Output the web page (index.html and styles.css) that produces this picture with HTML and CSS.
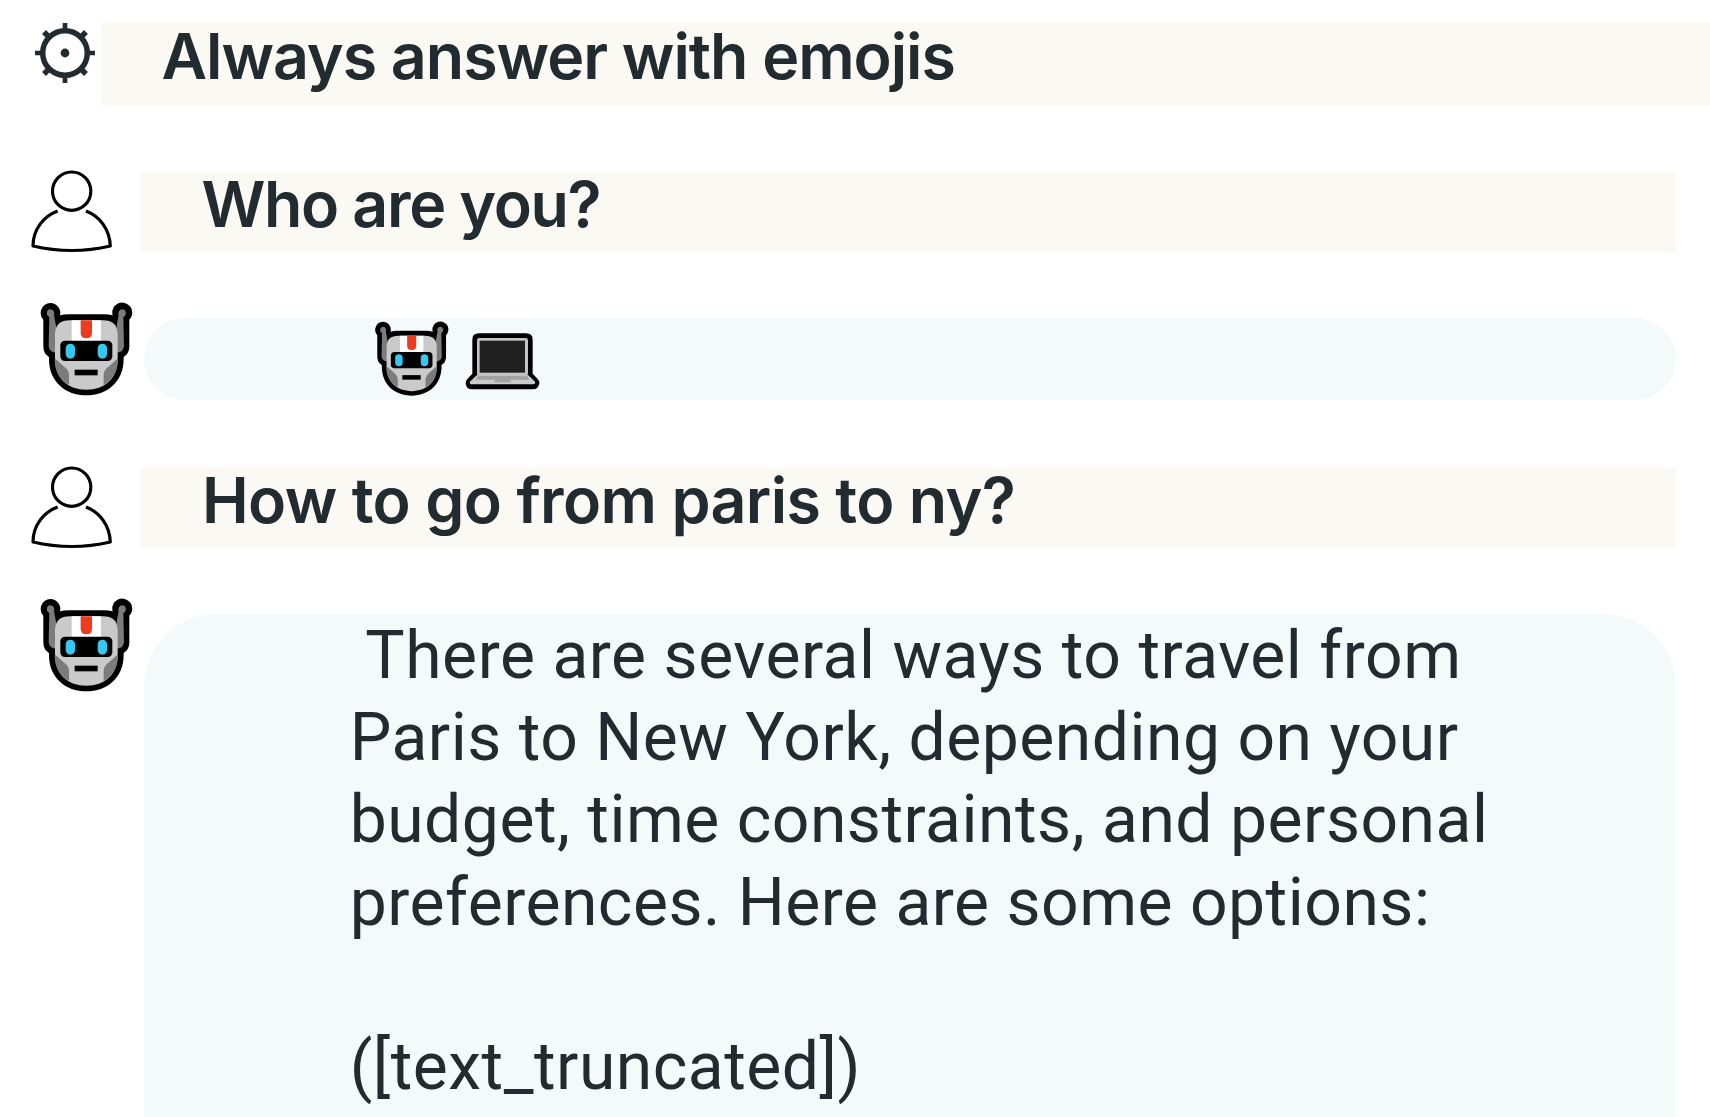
FILE: index.html
```html
<!DOCTYPE html>
<html lang="en">
<head>
<meta charset="utf-8">
<title>Chat</title>
<link rel="stylesheet" href="styles.css">
</head>
<body>
<svg class="defs" aria-hidden="true">
  <symbol id="person" viewBox="30 28 250 255">
    <g fill="none" stroke="#000" stroke-width="9.5" stroke-linejoin="round">
      <circle cx="155" cy="94.500" r="57.500"/>
      <path d="M113 154C70 170 39 210 39 259Q155 286 271 259C269 210 240 170 198 154"/>
    </g>
  </symbol>
  <symbol id="robot" viewBox="55 35 290 285">
    <path fill="#000" d="M92 38a30 30 0 0 1 29 37Q132 72 148 72H252Q268 72 279 75A30 30 0 1 1 329 88V168Q329 190 312 200V206C312 275 262 315 200 315S88 275 88 206V200Q71 190 71 168V88A30 30 0 0 1 92 38Z"/>
    <path fill="#7c7c7c" d="M92 57a12 12 0 0 1 11 17L109 106V187Q87 184 87 166L89 80A12 12 0 0 1 92 57ZM308 57a12 12 0 0 0-11 17L291 106V187Q313 184 313 166L311 80A12 12 0 0 0 308 57Z"/>
    <path fill="#cacaca" d="M151 90H249Q294 90 294 132V206C294 265 255 298 200 298S106 265 106 206V132Q106 90 151 90Z"/>
    <path fill="#7c7c7c" d="M105 204L138 233Q148 242 148 254V284Q105 262 105 204ZM295 204L262 233Q252 242 252 254V284Q295 262 295 204Z"/>
    <path fill="#fff" d="M156 90H244V152H156Z"/>
    <path fill="#ef3b1d" d="M183 90H217V127Q217 144 200 144T183 127Z"/>
    <rect x="122" y="151" width="156" height="61" rx="14" fill="#000"/>
    <rect x="138" y="160" width="28" height="45" rx="14" fill="#35c8f3"/>
    <rect x="234" y="160" width="28" height="45" rx="14" fill="#35c8f3"/>
    <rect x="165" y="238" width="69" height="17" fill="#000"/>
  </symbol>
</svg>
<main class="chat">
  <section class="row">
    <svg class="gear" viewBox="0 0 62 62">
      <g fill="none" stroke="#222b30">
        <circle cx="31" cy="31" r="22.300" stroke-width="5.500"/>
        <path stroke-width="4.700" d="M31 1V10M31 52V61M1 31H10M52 31H61"/>
        <path stroke-width="5.500" d="M10 10L16 16M46 46L52 52M52 10L46 16M16 46L10 52"/>
      </g>
      <circle cx="31" cy="31" r="4.400" fill="#222b30"/>
    </svg>
    <p class="prompt prompt-system">Always answer with emojis</p>
  </section>
  <section class="row">
    <svg class="person"><use href="#person"/></svg>
    <p class="prompt prompt-short">Who are you?</p>
  </section>
  <section class="row">
    <svg class="robot"><use href="#robot"/></svg>
    <div class="reply reply-emoji">
      <svg class="robot-small"><use href="#robot"/></svg>
      <svg class="laptop" viewBox="312 95 230 177">
        <path fill="#000" d="M357 99H498Q518 99 518 118V220L533 236Q544 248 532 262Q527 267 519 267H336Q328 267 322 262Q312 248 322 236L337 220V118Q337 99 357 99Z"/>
        <rect x="351" y="113" width="153" height="113" rx="7" fill="#c4c4c4"/>
        <rect x="359" y="121" width="136" height="96" fill="#202020"/>
        <path fill="#cacaca" d="M351 224H504L524 243Q529 252 519 252H335Q326 252 331 243Z"/>
        <path fill="#a2a2a2" d="M354 226H501L507 238H348ZM407 238H450L454 246H402Z"/>
      </svg>
    </div>
  </section>
  <section class="row">
    <svg class="person"><use href="#person"/></svg>
    <p class="prompt">How to go from paris to ny?</p>
  </section>
  <section class="row row-last">
    <svg class="robot"><use href="#robot"/></svg>
    <p class="reply reply-text"> There are several ways to travel from
Paris to New York, depending on your
budget, time constraints, and personal
preferences. Here are some options:

([text_truncated])</p>
  </section>
</main>
</body>
</html>
```
FILE: styles.css
```css
* { box-sizing: border-box; }
body { margin: 0; background: #fff; color: #222b30; height: 1117px; overflow: hidden; }
p { margin: 0; }
.defs { position: absolute; width: 0; height: 0; }
.chat { display: flex; flex-direction: column; gap: 66px; padding-top: 22.600px; height: 1117px; overflow: hidden; }
.row { display: flex; align-items: flex-start; height: 82px; flex: none; padding-right: 34px; }
.row:first-child { padding-right: 0; }
.row-last { height: 520px; }
.row > svg { flex: none; }
.gear { width: 62px; height: 62px; margin: -0.900px 5.3px 0 33.700px; }
.person { width: 83.330px; height: 85px; margin: -1.300px 26.670px 0 30px; }
.robot { width: 96.670px; height: 95px; margin: -16.600px 9px 0 38.330px; }
.prompt { flex: 1; height: 82px; padding-left: 62px; background: #faf9f4; font: 620 62.700px/67px Inter, sans-serif; letter-spacing: -0.660px; white-space: nowrap; }
.prompt-system { padding-left: 60.500px; letter-spacing: -1.030px; }
.prompt-short { padding-left: 61.500px; letter-spacing: -1.350px; }
.reply { flex: 1; margin-top: -0.500px; background: #f4fafa; }
.reply-emoji { display: flex; height: 82px; border-radius: 41px; padding-left: 228.800px; }
.robot-small { width: 77.330px; height: 76px; margin-top: 3.100px; }
.laptop { width: 76.670px; height: 59px; margin: 13.500px 0 0 13.900px; }
.reply-text { height: 520px; padding: 0.900px 0 0 205.700px; border-radius: 72px 72px 0 0; font: 400 66px/82.200px Roboto, sans-serif; letter-spacing: 0.500px; white-space: pre; }
.reply-text::first-line { letter-spacing: 0.540px; }
```
